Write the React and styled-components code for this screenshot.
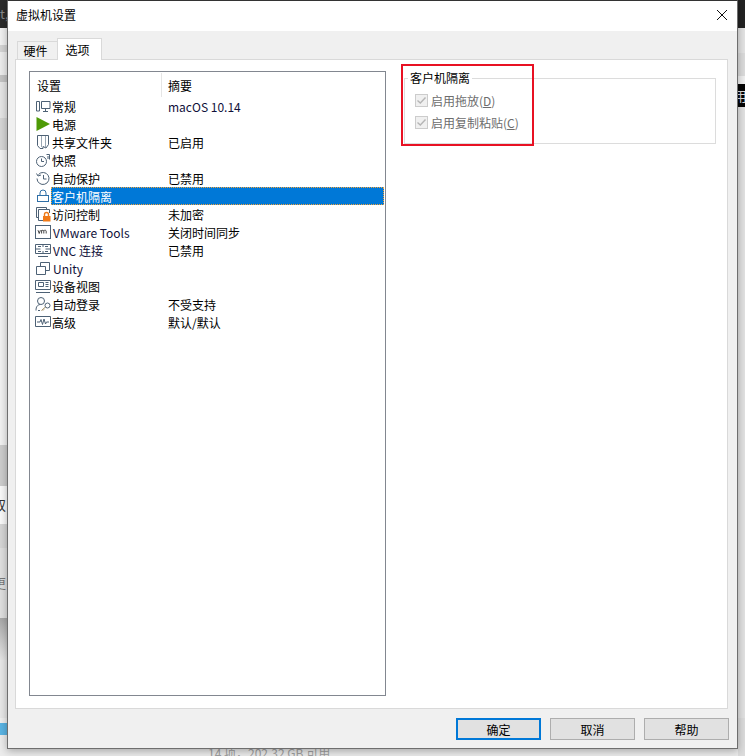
import React from "react";
import styled, { createGlobalStyle } from "styled-components";

const GlobalStyle = createGlobalStyle`
    html, body {
        margin: 0;
        padding: 0;
        background: #e9e9e9;
    }
    body {
        font-family: "Noto Sans CJK SC", "Liberation Sans", sans-serif;
        font-size: 12px;
        color: #000;
    }
`

const Desktop = styled.div`
    position: relative;
    width: 745px;
    height: 756px;
    overflow: hidden;
    background: #ececec;
`
const BackStrip = styled.div`
    position: absolute;
    top: 0;
    bottom: 0;
    width: ${(p) => p.$width}px;
    ${(p) => (p.$right ? "right: 0;" : "left: 0;")}
    display: flex;
    flex-direction: column;
`
const Band = styled.div`
    flex: none;
    height: ${(p) => p.$h}px;
    background: ${(p) => p.$bg};
    color: ${(p) => p.$color || "#333"};
    font-size: 13px;
    line-height: ${(p) => p.$h}px;
    text-indent: ${(p) => p.$indent || 0}px;
    overflow: hidden;
    white-space: nowrap;
`
const StatusText = styled.div`
    position: absolute;
    left: 208px;
    top: 745px;
    font-size: 12px;
    line-height: 16px;
    color: #a0a0a0;
    white-space: pre;
`
const Dialog = styled.div`
    position: absolute;
    left: 7px;
    top: 0;
    width: 729px;
    height: 747px;
    display: flex;
    flex-direction: column;
    background: #f0f0f0;
    border: 1px solid #6e6e6e;
    border-top-color: #333;
    box-shadow: 0 2px 8px rgba(0, 0, 0, 0.3);
`
const TitleBar = styled.div`
    height: 28px;
    flex: none;
    display: flex;
    align-items: center;
    justify-content: space-between;
    padding: 0 9px 2px 8px;
    background: #fff;
`
const Title = styled.span`
    font-size: 12px;
    margin-top: -2px;
`
const CloseButton = styled.button`
    border: 0;
    padding: 0;
    background: none;
    display: flex;
`
const Body = styled.div`
    flex: 1;
    display: flex;
    flex-direction: column;
    padding: 7px 9px 0 7px;
`
const Tabs = styled.div`
    display: flex;
    align-items: flex-end;
    height: 21px;
    padding-left: 2px;
    position: relative;
    z-index: 1;
`
const Tab = styled.div`
    width: ${(p) => (p.$active ? 45 : 40)}px;
    height: ${(p) => (p.$active ? 22 : 18)}px;
    margin-bottom: ${(p) => (p.$active ? -1 : 0)}px;
    padding-right: 4px;
    box-sizing: border-box;
    border: 1px solid #d9d9d9;
    border-right-width: ${(p) => (p.$active ? 1 : 0)}px;
    border-bottom: none;
    background: ${(p) => (p.$active ? "#fff" : "#f0f0f0")};
    display: flex;
    justify-content: center;
    align-items: center;
    font-size: 12px;
`
const TabPanel = styled.div`
    width: 713px;
    height: 650px;
    flex: none;
    box-sizing: border-box;
    background: #fff;
    border: 1px solid #d9d9d9;
    display: flex;
    padding: 11px 11px 12px 13px;
    gap: 16px;
`
const ListBox = styled.div`
    width: 357px;
    height: 625px;
    flex: none;
    box-sizing: border-box;
    border: 1px solid #828790;
    background: #fff;
    padding-top: 1px;
`
const HeaderRow = styled.div`
    height: 24px;
    display: grid;
    grid-template-columns: 132px 1fr;
    align-items: center;
`
const HeaderCell = styled.div`
    height: 24px;
    line-height: 26px;
    padding-left: ${(p) => p.$pad}px;
    border-right: ${(p) => (p.$divider ? "1px solid #e5e5e5" : "none")};
`
const Rows = styled.div`
    display: flex;
    flex-direction: column;
`
const Row = styled.div`
    height: 18px;
    display: grid;
    grid-template-columns: 21px 111px 1fr;
    align-items: center;
    line-height: 20px;
`
const RowIcon = styled.span`
    display: flex;
    padding-left: 5px;
`
const RowName = styled.span`
    height: 18px;
    white-space: nowrap;
    padding-left: ${(p) => (p.$dark ? 2 : 1)}px;
    ${(p) => p.$dark && "color: #10103a;"}
    ${(p) =>
        p.$selected &&
        `
        background: #0078d7;
        color: #fff;
        margin-right: -222px;
        position: relative;
        outline: 1px dotted #f2a33a;
        outline-offset: -1px;
    `}
`
const RowSummary = styled.span`
    height: 18px;
    padding-left: 6px;
    white-space: nowrap;
    ${(p) => p.$dark && "color: #10103a;"}
`
const SidePanel = styled.div`
    flex: 1;
    display: flex;
    flex-direction: column;
`
const GroupBox = styled.fieldset`
    margin: 0 0 0 2px;
    padding: 4px 0 0 10px;
    height: 73px;
    width: 312px;
    box-sizing: border-box;
    border: 1px solid #dcdcdc;
    min-width: 0;
`
const GroupLegend = styled.legend`
    padding: 0 2px;
    margin-left: -7px;
    font-size: 12px;
    line-height: 14px;
`
const CheckRow = styled.label`
    display: flex;
    align-items: center;
    gap: 3px;
    height: 22px;
    color: #6d6d6d;
`
const CheckBox = styled.span`
    width: 13px;
    height: 13px;
    box-sizing: border-box;
    border: 1px solid #cccccc;
    background: #f0f0f0;
    display: flex;
    flex: none;
`
const Mnemonic = styled.span`
    text-decoration: underline;
`
const Highlight = styled.div`
    position: absolute;
    left: 401px;
    top: 64px;
    width: 133px;
    height: 82px;
    box-sizing: border-box;
    border: 2px solid #e81123;
    pointer-events: none;
`
const Footer = styled.div`
    flex: 1;
    display: flex;
    justify-content: flex-end;
    align-items: flex-start;
    gap: 9px;
    padding-top: 9px;
    margin-right: -1px;
`
const DialogButton = styled.button`
    width: 85px;
    height: 22px;
    padding: 0;
    box-sizing: border-box;
    background: #e1e1e1;
    border: ${(p) => (p.$primary ? "2px solid #0078d7" : "1px solid #adadad")};
    font-family: inherit;
    font-size: 12px;
    color: #000;
`

const stroke = "#4d6175";

const Icon = ({ children }) => (
    <svg width="16" height="16" viewBox="0 0 16 16" fill="none" stroke={stroke} strokeWidth="1">
        {children}
    </svg>
);

const icons = {
    general: (
        <Icon>
            <path d="M1.5 3.5h3v9.5h-3zM6.5 3.5h8.5v7h-8.5zM10.5 10.5v2.5M8 13.5h5" />
        </Icon>
    ),
    power: (
        <svg width="16" height="16" viewBox="0 0 16 16">
            <path d="M1.5 1L15 8L1.5 15z" fill="#4e9a06" />
        </svg>
    ),
    shared: (
        <Icon>
            <path d="M2.5 1.5h11v9l-2.5 3.5-3-1.5v2h-3l-2.5-3z" />
            <path d="M6.5 2v11M10.5 2v11" stroke="#9aa7b3" />
        </Icon>
    ),
    snapshot: (
        <Icon>
            <circle cx="6.5" cy="9.5" r="5" />
            <path d="M6.5 6.5V9.5h2.5" />
            <path d="M11.5 2.5h3v5" />
            <path d="M13 4v3" />
        </Icon>
    ),
    autoprotect: (
        <Icon>
            <path d="M3.5 4.5a6 6 0 1 1-1.5 4" />
            <path d="M1.5 3.5L3 6l3-1M8.5 5V9h3" />
        </Icon>
    ),
    lock: (
        <svg width="16" height="16" viewBox="0 0 16 16" fill="none" stroke="#2f6fa7" strokeWidth="1">
            <rect x="2.5" y="7.5" width="11" height="6" />
            <path d="M5 7.5V5a3 3 0 0 1 6 0v2.5" />
        </svg>
    ),
    access: (
        <svg width="16" height="16" viewBox="0 0 16 16" fill="none" stroke={stroke} strokeWidth="1">
            <path d="M3.5 11.5H1.5V1.5H11.5V3.5" />
            <path d="M8 14.5H3.5V3.5H14.5V7" />
            <path d="M9.5 10V8.5a2 2 0 0 1 4 0V10" stroke="#f07a18" strokeWidth="1.4" />
            <rect x="8" y="10" width="7.5" height="5.5" fill="#f07a18" stroke="none" />
        </svg>
    ),
    vmware: (
        <svg width="16" height="16" viewBox="0 0 16 16">
            <rect x="0.5" y="1.5" width="15" height="13" fill="#fff" stroke={stroke} />
            <path d="M3 6.2l1.2 3.3 1.2-3.3M6.6 9.5V6.2M6.6 7c.8-1.2 2-1 2.2.2v2.3M8.8 7c.8-1.2 2.2-1 2.4.2v2.3" fill="none" stroke="#333" strokeWidth="0.9" />
        </svg>
    ),
    vnc: (
        <Icon>
            <path d="M0.5 2.5h15v9h-15zM0.5 7h5M10.5 7h5M8 2.5V5M8 9v2.5M3 4.5h3M10 4.5h3M3 9.5h3M10 9.5h3M3 14.5h10" />
        </Icon>
    ),
    unity: (
        <Icon>
            <path d="M1.5 6.5h9v8h-9zM5.5 6.5v-4h9v8h-4" />
        </Icon>
    ),
    device: (
        <Icon>
            <path d="M0.5 2.5h15v9h-15zM3.5 4.5h5v4h-5zM10.5 4.5h3M10.5 6.5h3M10.5 8.5h3M1 14.5h14" />
        </Icon>
    ),
    autologin: (
        <Icon>
            <circle cx="6" cy="5" r="3.5" />
            <path d="M1 14.5c0-4 1.5-5.5 4-6M3 14.5h2" />
            <circle cx="12.5" cy="9.5" r="2.5" />
            <path d="M10.5 11L6.5 14.5M8 14.5l1-1" stroke="#a08a5a" />
        </Icon>
    ),
    advanced: (
        <Icon>
            <path d="M0.5 2.5h15v10h-15z" />
            <path d="M2 8h3l1-2.5 1.5 5 1.5-5.5 1.5 5 1-2h2.5" />
        </Icon>
    ),
};

const settings = [
    { icon: "general", name: "常规", summary: "macOS 10.14", dark: true },
    { icon: "power", name: "电源" },
    { icon: "shared", name: "共享文件夹", summary: "已启用" },
    { icon: "snapshot", name: "快照" },
    { icon: "autoprotect", name: "自动保护", summary: "已禁用" },
    { icon: "lock", name: "客户机隔离", selected: true },
    { icon: "access", name: "访问控制", summary: "未加密" },
    { icon: "vmware", name: "VMware Tools", summary: "关闭时间同步", darkName: true },
    { icon: "vnc", name: "VNC 连接", summary: "已禁用", darkName: true },
    { icon: "unity", name: "Unity", darkName: true },
    { icon: "device", name: "设备视图" },
    { icon: "autologin", name: "自动登录", summary: "不受支持" },
    { icon: "advanced", name: "高级", summary: "默认/默认" },
];

const leftBands = [
    { h: 28, bg: "#2b2b2b", text: "t,", color: "#8a8a8a" },
    { h: 17, bg: "#f2f2f2" },
    { h: 7, bg: "#d4d4d4" },
    { h: 23, bg: "#ededed" },
    { h: 7, bg: "#c4c4c4" },
    { h: 36, bg: "#e6e6e6" },
    { h: 32, bg: "#d6d6d6" },
    { h: 295, bg: "#f2f2f2" },
    { h: 41, bg: "#cdcdcd" },
    { h: 38, bg: "#fafafa", text: "双", indent: -7 },
    { h: 24, bg: "#d6d6d6" },
    { h: 70, bg: "#e0e0e0", text: "更", indent: -7, color: "#777" },
    { h: 42, bg: "linear-gradient(#a8a8a8, #e6e6e6)" },
    { h: 58, bg: "#e8e8e8" },
    { h: 5, bg: "#f0f0f0" },
    { h: 12, bg: "#5ab4e4" },
    { h: 21, bg: "#ececec" },
];

const rightBands = [
    { h: 28, bg: "#222" },
    { h: 25, bg: "#e4e4e4" },
    { h: 23, bg: "#dcdcdc" },
    { h: 8, bg: "#f0f0f0" },
    { h: 23, bg: "#050505", text: "用", indent: -4, color: "#ddd" },
    { h: 611, bg: "#e2e2e2" },
    { h: 38, bg: "#dcdcdc" },
];

function Check() {
    return (
        <CheckBox>
            <svg width="11" height="11" viewBox="0 0 11 11" fill="none" stroke="#b5b5b5" strokeWidth="1.4">
                <path d="M1.5 5.5l2.8 2.5 5.2-5.5" />
            </svg>
        </CheckBox>
    );
}

function App() {
    return (
        <Desktop>
            <GlobalStyle />
            <BackStrip $width={7}>
                {leftBands.map((b, i) => (
                    <Band key={i} $h={b.h} $bg={b.bg} $color={b.color} $indent={b.indent}>{b.text}</Band>
                ))}
            </BackStrip>
            <BackStrip $width={7} $right>
                {rightBands.map((b, i) => (
                    <Band key={i} $h={b.h} $bg={b.bg} $color={b.color} $indent={b.indent}>{b.text}</Band>
                ))}
            </BackStrip>
            <StatusText>14 项，202.32 GB 可用</StatusText>
            <Dialog>
                <TitleBar>
                    <Title>虚拟机设置</Title>
                    <CloseButton aria-label="关闭">
                        <svg width="12" height="12" viewBox="0 0 12 12" stroke="#111" strokeWidth="1" fill="none">
                            <path d="M1 1l10 10M11 1L1 11" />
                        </svg>
                    </CloseButton>
                </TitleBar>
                <Body>
                    <Tabs>
                        <Tab>硬件</Tab>
                        <Tab $active>选项</Tab>
                    </Tabs>
                    <TabPanel>
                        <ListBox>
                            <HeaderRow>
                                <HeaderCell $pad={7} $divider>设置</HeaderCell>
                                <HeaderCell $pad={6}>摘要</HeaderCell>
                            </HeaderRow>
                            <Rows>
                                {settings.map((s) => (
                                    <Row key={s.name}>
                                        <RowIcon>{icons[s.icon]}</RowIcon>
                                        <RowName $selected={s.selected} $dark={s.darkName}>{s.name}</RowName>
                                        <RowSummary $dark={s.dark}>{s.summary}</RowSummary>
                                    </Row>
                                ))}
                            </Rows>
                        </ListBox>
                        <SidePanel>
                            <GroupBox>
                                <GroupLegend>客户机隔离</GroupLegend>
                                <CheckRow>
                                    <Check />
                                    <span>启用拖放(<Mnemonic>D</Mnemonic>)</span>
                                </CheckRow>
                                <CheckRow>
                                    <Check />
                                    <span>启用复制粘贴(<Mnemonic>C</Mnemonic>)</span>
                                </CheckRow>
                            </GroupBox>
                        </SidePanel>
                    </TabPanel>
                    <Footer>
                        <DialogButton $primary>确定</DialogButton>
                        <DialogButton>取消</DialogButton>
                        <DialogButton>帮助</DialogButton>
                    </Footer>
                </Body>
            </Dialog>
            <Highlight />
        </Desktop>
    );
}

export default App;
